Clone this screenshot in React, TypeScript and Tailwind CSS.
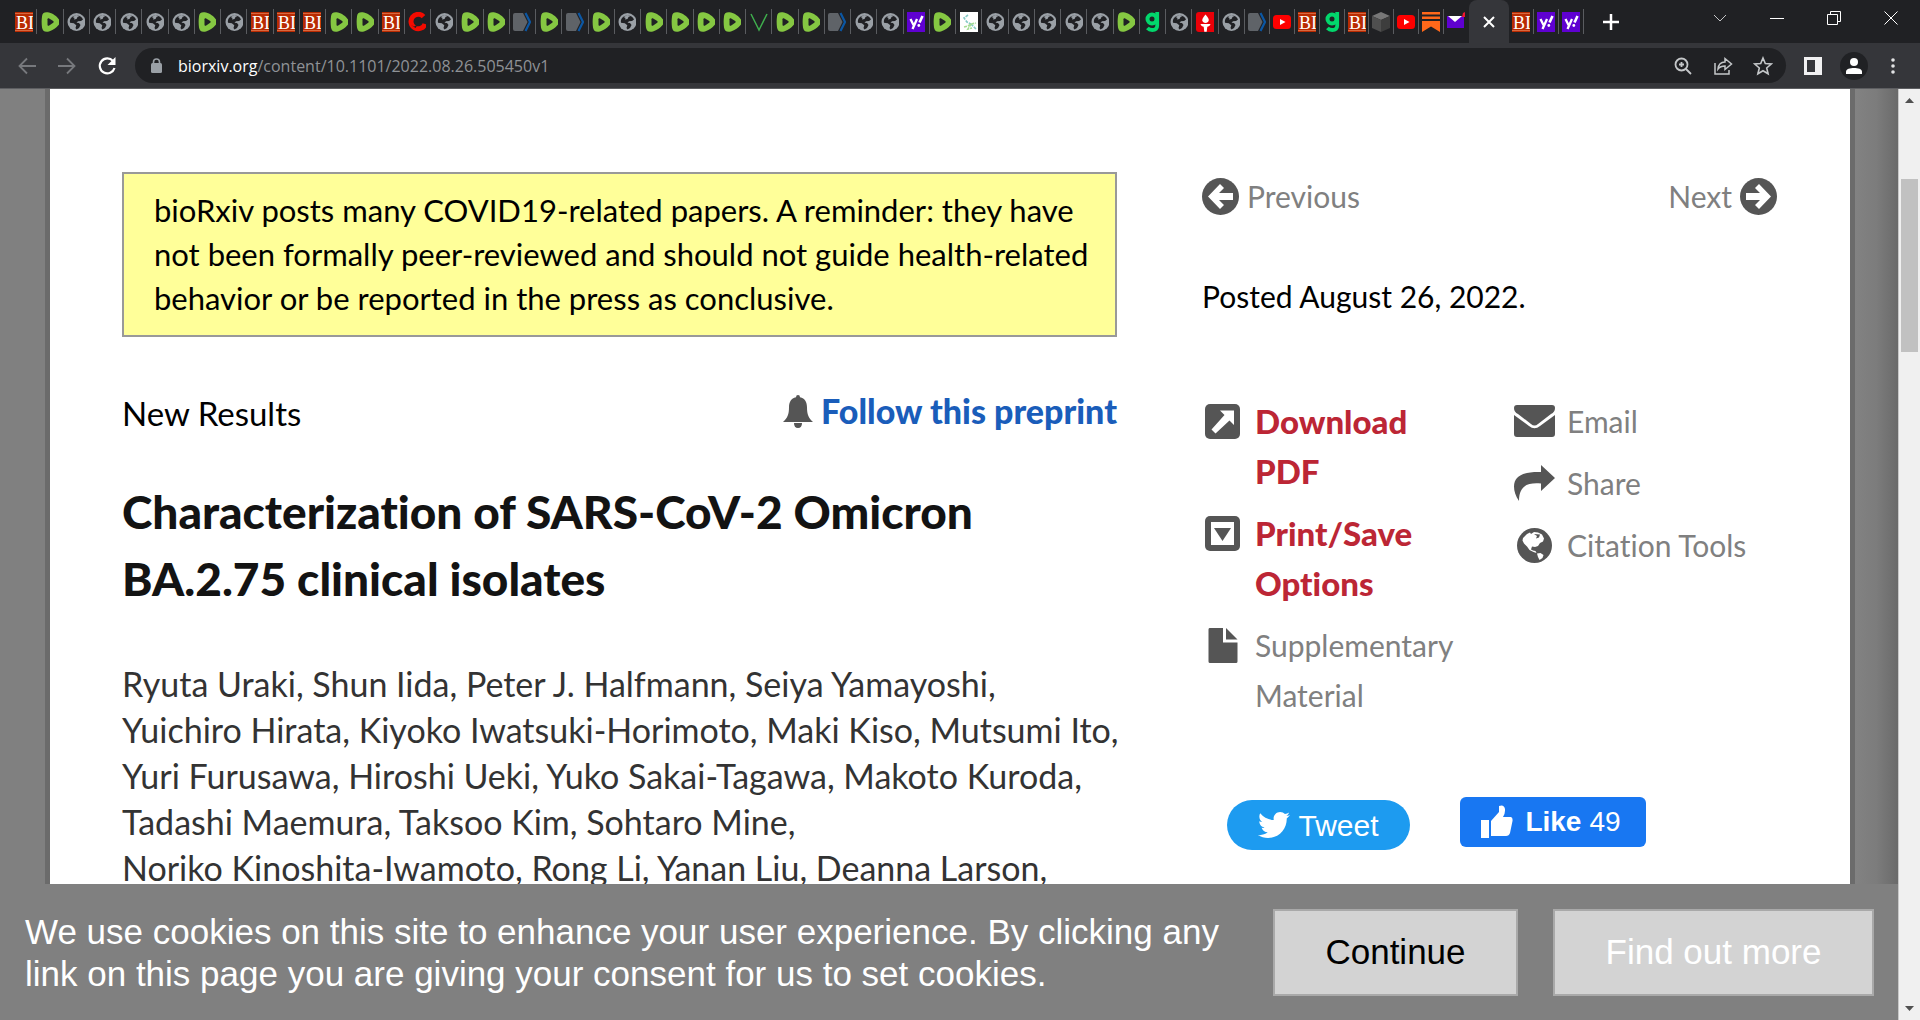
import { FaTwitter } from "react-icons/fa";

const wideTabs =
  "bi rumble globe globe globe globe globe rumble globe bi bi bi rumble rumble bi ring globe rumble rumble tag rumble tag rumble globe rumble rumble rumble rumble vee rumble rumble tag globe globe yahoo rumble mesh globe globe globe globe globe rumble gee globe torch globe".split(
    " ",
  );
const narrowTabs = "tag youtube bi gee bi cube youtube substack mail".split(" ");
const lastTabs = "bi yahoo yahoo".split(" ");

function Glyph({ kind }: { kind: string }) {
  switch (kind) {
    case "bi":
      return (
        <>
          <rect width="20" height="20" fill="#b92b02" />
          <path d="M0 1.5h20M0 18.5h20" stroke="#e0794f" strokeWidth="0.8" />
          <text x="1" y="16.5" fontFamily="Liberation Serif, serif" fontSize="18" fill="#fff">
            BI
          </text>
        </>
      );
    case "rumble":
      return (
        <>
          <path
            d="M1 4.5C1 1 4 -.5 8 .6c4 1 8 4 9.600 6.400 1.500 2 1.500 4 0 6-2.100 2.600-5.600 5.400-9.600 6.400-4 1-6.500-.4-7-3.900C.5 11.500.5 8 1 4.500z"
            fill="#85c742"
          />
          <path d="M6.500 7.200c0-1 .8-1.300 1.700-.8l4 2.700c.7.5.7 1.200 0 1.700l-4 2.800c-.9.5-1.700.1-1.700-.9z" fill="#202124" />
        </>
      );
    case "globe":
      return (
        <>
          <circle cx="9.500" cy="10" r="9" fill="#9aa0a6" />
          <path
            d="M10 3.500c2.500 0 5 1.500 6 4l-2 1.500-3 .2-1.500 1.500 2.500.3 1.500 2-1.500 3-2.500 1.400-1-1.500.8-2.600-2.500-2-3.800-.6c-.8-3.700 2-7.200 7-7.200z"
            fill="#202124"
          />
          <path d="M5.500 5l2 1-.5 1.500 2.500-.5 1-2 2-1-3-1z" fill="#9aa0a6" />
        </>
      );
    case "ring":
      return (
        <>
          <path d="M15.500 4.600A7.200 7.200 0 1 0 17 12" fill="none" stroke="#f40b00" strokeWidth="5" />
          <path d="M3 13l3 1.500 3.500-1.500-2 3z" fill="#202124" />
        </>
      );
    case "tag":
      return (
        <>
          <path d="M0 3q0-2 2-2h8l4.500 9-4.500 9H2q-2 0-2-2z" fill="#5f6368" />
          <path d="M12.500 1l4.500 9-4.500 9" fill="none" stroke="#0b57a4" strokeWidth="2.200" />
        </>
      );
    case "vee":
      return <path d="M1 2l6.500 13 1.500 3 1.500-3L17 2" fill="none" stroke="#3fae4d" strokeWidth="1.500" />;
    case "yahoo":
      return (
        <>
          <rect width="20" height="20" fill="#5f01d1" />
          <path d="M3.500 7l3 6M10 7l-4.500 10" stroke="#fff" strokeWidth="2.300" />
          <path d="M15.500 4l-3 6.500" stroke="#fff" strokeWidth="2.600" />
          <circle cx="11.800" cy="13.500" r="1.400" fill="#fff" />
        </>
      );
    case "mesh":
      return (
        <>
          <rect width="20" height="20" fill="#fff" />
          <path d="M8 3L4 6l3 4 4 2M11 12l5 5" fill="none" stroke="#84c9c5" strokeWidth="1.600" strokeDasharray="3 1" />
          <path d="M4 15l4-1 3-2 5-1M11 12l-3 5 4-1" fill="none" stroke="#a4dc93" strokeWidth="1.600" strokeDasharray="3 1" />
        </>
      );
    case "gee":
      return (
        <>
          <circle cx="9" cy="7" r="4.500" fill="none" stroke="#02d76c" strokeWidth="4" />
          <path d="M14.200 0v13.500c0 3-2 4.500-5 4.500-2 0-3.500-.6-4.800-2" fill="none" stroke="#02d76c" strokeWidth="3.800" />
        </>
      );
    case "torch":
      return (
        <>
          <rect width="20" height="20" rx="3" fill="#ea0008" />
          <path d="M9.500 2.500c2.500 3 3.500 4.500 3.200 6-.3 1.500-1.600 2.500-3.200 2.500s-3-1-3.200-2.500c-.2-1.500.8-3 3.200-6z" fill="#fff" />
          <path d="M4.500 12h10c-.5 2-2 2.700-3.200 2.700l-.6 5H8.300l-.6-5c-1.200 0-2.700-.7-3.200-2.700z" fill="#fff" />
        </>
      );
    case "youtube":
      return (
        <>
          <rect y="3" width="18" height="14" rx="3.500" fill="#fe0000" />
          <path d="M7 7l5.500 3L7 13z" fill="#fff" />
        </>
      );
    case "cube":
      return (
        <>
          <path d="M9 0l9 4-9 4-9-4z" fill="#777" />
          <path d="M0 4l9 4v12l-9-4z" fill="#4f4f4f" />
          <path d="M18 4L9 8v12l9-4z" fill="#3d3d3d" />
        </>
      );
    case "substack":
      return <path d="M0 0h18v2.500H0zM0 4.500h18V7H0zM0 9h18v11l-9-5.500L0 20z" fill="#ff681a" />;
    default:
      return (
        <>
          <rect y="4" width="17" height="12" fill="#5f01d1" />
          <path d="M1 4h14l-7 6z" fill="#fff" />
          <path d="M16 1l2-1v5h-3z" fill="#f0162f" />
        </>
      );
  }
}

function Favicon({ kind }: { kind: string }) {
  return (
    <svg viewBox="0 0 20 20" preserveAspectRatio="xMinYMid slice" className="h-5 w-[18px]" aria-hidden="true">
      <Glyph kind={kind} />
    </svg>
  );
}

function TabGroup({ kinds, className, dividers = true }: { kinds: string[]; className: string; dividers?: boolean }) {
  return (
    <div className={`flex h-[25px] ${className}`}>
      {kinds.map((kind, idx) => (
        <button
          key={idx}
          aria-label={kind}
          className={`flex flex-1 items-center justify-center border-r ${
            !dividers && idx === kinds.length - 1 ? "border-transparent" : "border-[#5a5c60]"
          }`}
        >
          <Favicon kind={kind} />
        </button>
      ))}
    </div>
  );
}

function TabStrip() {
  return (
    <div className="flex h-[43px] items-center overflow-hidden bg-[#202124] pr-px pl-[11px]">
      <TabGroup kinds={wideTabs} className="w-[1234px] shrink-0" />
      <TabGroup kinds={narrowTabs} className="w-[224px] shrink-0" dividers={false} />
      <div className="flex h-full w-10 shrink-0 items-center justify-center rounded-t-lg bg-[#35363a]">
        <svg viewBox="0 0 12 12" className="size-3" stroke="#fff" strokeWidth="2">
          <path d="M1 1l10 10M11 1L1 11" />
        </svg>
      </div>
      <TabGroup kinds={lastTabs} className="w-[75px] shrink-0" />
      <button aria-label="New tab" className="ml-[19px]">
        <svg viewBox="0 0 16 16" className="size-4" stroke="#fff" strokeWidth="2.500">
          <path d="M8 0v16M0 8h16" />
        </svg>
      </button>
      <div className="ml-auto flex shrink-0 pb-2 text-white">
        <button aria-label="Search tabs" className="flex w-[57px] justify-center">
          <svg viewBox="0 0 14 14" className="size-3.5" fill="none" stroke="#c4c5c7">
            <path d="M1 4l6 6 6-6" />
          </svg>
        </button>
        <button aria-label="Minimize" className="flex w-[57px] justify-center">
          <svg viewBox="0 0 14 14" className="size-3.5" stroke="currentColor">
            <path d="M0 7.500h14" />
          </svg>
        </button>
        <button aria-label="Restore" className="flex w-[57px] justify-center">
          <svg viewBox="0 0 14 14" className="size-3.5" fill="none" stroke="currentColor">
            <path d="M.5 3.500h10v10H.5zM3.500 3.500v-3h10v10h-3" />
          </svg>
        </button>
        <button aria-label="Close" className="flex w-[57px] justify-center">
          <svg viewBox="0 0 14 14" className="size-3.5" stroke="currentColor">
            <path d="M.5.5l13 13M13.500.5l-13 13" />
          </svg>
        </button>
      </div>
    </div>
  );
}

function Toolbar() {
  return (
    <div className="flex h-[46px] items-center border-b border-[#5d5e61] bg-[#35363a] pr-[25px] pl-[17px]">
      <button aria-label="Back">
        <svg viewBox="0 0 20 20" className="size-5" fill="none" stroke="#77797d" strokeWidth="1.800">
          <path d="M19 10H3M10 2.500L2.500 10l7.500 7.500" />
        </svg>
      </button>
      <button aria-label="Forward" className="ml-5">
        <svg viewBox="0 0 20 20" className="size-5" fill="none" stroke="#77797d" strokeWidth="1.800">
          <path d="M1 10h16M10 2.500l7.500 7.500-7.500 7.500" />
        </svg>
      </button>
      <button aria-label="Reload" className="ml-5">
        <svg viewBox="0 0 20 20" className="size-5" fill="none" stroke="#fff" strokeWidth="2.200">
          <path d="M16 5a7.500 7.500 0 1 0 1.500 7" />
          <path d="M18.500 1v8h-8z" fill="#fff" stroke="none" />
        </svg>
      </button>
      <div className="ml-[18px] flex h-[35px] flex-1 items-center rounded-full bg-[#202124] pr-[13px] pl-4 font-['Open_Sans',sans-serif] text-base">
        <svg viewBox="0 0 12 16" className="mr-[15px] h-4 w-3 shrink-0">
          <rect y="5" width="11" height="10" rx="1.500" fill="#9aa0a6" />
          <path d="M2.500 6V4a3 3 0 0 1 6 0v2" fill="none" stroke="#9aa0a6" strokeWidth="1.600" />
        </svg>
        <span className="text-white">biorxiv.org</span>
        <span className="text-[#8f9296]">/content/10.1101/2022.08.26.505450v1</span>
        <div className="ml-auto flex gap-5">
          <button aria-label="Zoom">
            <svg viewBox="0 0 20 20" className="size-5" fill="none" stroke="#c4c7c9" strokeWidth="1.800">
              <circle cx="8.500" cy="8.500" r="6" />
              <path d="M13 13l5 5M8.500 6v5M6 8.500h5" />
            </svg>
          </button>
          <button aria-label="Share this page">
            <svg viewBox="0 0 20 20" className="size-5" fill="none" stroke="#c4c7c9" strokeWidth="1.500">
              <path d="M2 7v11h14v-4" />
              <path d="M5 13c.5-5 3-7 7-7V2.500L18.500 8 12 13.500V10c-3 0-5 .5-7 3z" />
            </svg>
          </button>
          <button aria-label="Bookmark">
            <svg viewBox="0 0 20 20" className="size-5" fill="none" stroke="#c4c7c9" strokeWidth="1.600">
              <path d="M10 2l2.300 5.500 6 .5-4.600 4 1.400 5.800L10 14.700l-5.100 3.100L6.300 12 1.700 8l6-.5z" />
            </svg>
          </button>
        </div>
      </div>
      <button aria-label="Side panel" className="ml-[18px]">
        <svg viewBox="0 0 18 18" className="size-[18px]">
          <path d="M0 0h18v18H0zM3 3v12h8V3z" fill="#f1f1f2" fillRule="evenodd" />
        </svg>
      </button>
      <button aria-label="Profile" className="ml-[18px] flex size-7 items-center justify-center rounded-full bg-[#202124]">
        <svg viewBox="0 0 16 16" className="size-4" fill="#fff">
          <circle cx="8" cy="4" r="4" />
          <path d="M0 16v-2.500C0 11 4 10 8 10s8 1 8 3.500V16z" />
        </svg>
      </button>
      <button aria-label="Menu" className="ml-[23px]">
        <svg viewBox="0 0 4 16" className="h-4 w-1" fill="#e3e4e5">
          <circle cx="2" cy="2" r="1.800" />
          <circle cx="2" cy="8" r="1.800" />
          <circle cx="2" cy="14" r="1.800" />
        </svg>
      </button>
    </div>
  );
}

function ArrowCircle({ flip = false }: { flip?: boolean }) {
  return (
    <svg viewBox="0 0 37 37" className={flip ? "size-[37px] rotate-180" : "size-[37px]"}>
      <circle cx="18.500" cy="18.500" r="18.500" fill="#555" />
      <path d="M6 18.500L18 6l4 4-5 5h14v7H17l5 5-4 4z" fill="#fff" />
    </svg>
  );
}

function ToolIcon({ kind }: { kind: string }) {
  switch (kind) {
    case "pdf":
      return (
        <svg viewBox="0 0 35 35" className="h-[35px] w-[35px]">
          <rect width="35" height="35" rx="5" fill="#555" />
          <path d="M15 6.500h14v14.500l-4.500-4.500L10.500 29.500 6.500 25.500 19.500 11z" fill="#fff" />
        </svg>
      );
    case "print":
      return (
        <svg viewBox="0 0 35 35" className="h-[35px] w-[35px]">
          <rect width="35" height="35" rx="5" fill="#555" />
          <path d="M6 6h23v23H6z" fill="#fff" />
          <path d="M9 12h17l-8.500 13z" fill="#555" />
        </svg>
      );
    case "file":
      return (
        <svg viewBox="0 0 30 35" className="h-[35px] w-[30px]" fill="#555">
          <path d="M1.500 0H15v14.500h14.500v19q0 1.500-1.500 1.500H2q-1.500 0-1.500-1.500V1.500Q.5 0 1.500 0z" />
          <path d="M18 0l11.500 11.500H18z" />
        </svg>
      );
    case "email":
      return (
        <svg viewBox="0 0 41 32" className="h-[32px] w-[41px]" fill="#555">
          <path d="M3 0h35q3 0 3 3 0 4-4 6L24 19q-3.500 3-7 0L4 9Q0 7 0 3q0-3 3-3z" />
          <path d="M0 10l15 11q5.500 4.500 11 0l15-11v19q0 3-3 3H3q-3 0-3-3z" />
        </svg>
      );
    case "share":
      return (
        <svg viewBox="0 0 41 36" className="h-[36px] w-[41px]" fill="#555">
          <path d="M27 0l14 13-14 13v-7.500C15 17.500 5 19.500 5 36 1.500 31 0 26 0 21.500 0 11 9 6.500 27 7z" />
        </svg>
      );
    default:
      return (
        <svg viewBox="0 0 35 35" className="h-[35px] w-[35px]">
          <circle cx="17.500" cy="17.500" r="17.500" fill="#555" />
          <path
            d="M6 10l4-4 3-1.500 1 1.500 3-2 4 .5 4 2 2 4-1 3-3 1.500-2 3-3 1-3-.5-1 3 2 1 2.500.5 1 2-3-1-4-2-2.500-3.500-3-3-1.500-3z"
            fill="#fff"
          />
          <path d="M20 25.500l3.500-.5 3 2-1 3-3 2-1.500-3z" fill="#fff" />
          <path d="M17 6l3 2-1 2.500 3-1 1-3z" fill="#555" />
        </svg>
      );
  }
}

function ToolLink({ kind, label, strong = false }: { kind: string; label: string; strong?: boolean }) {
  return (
    <a
      href="#tools"
      className={`flex leading-[50px] ${strong ? "text-[33px] font-black text-[#bc2635]" : "text-[30px] text-[#808080]"}`}
    >
      <span className="mr-3 flex h-[50px] w-[41px] shrink-0 items-center justify-center">
        <ToolIcon kind={kind} />
      </span>
      {label}
    </a>
  );
}

function Sidebar() {
  return (
    <aside className="mr-[73px] w-[575px] shrink-0">
      <nav className="mt-1 flex justify-between text-[30px] leading-[40px] text-[#808080]">
        <a href="#previous" className="flex items-center gap-2">
          <ArrowCircle />
          Previous
        </a>
        <a href="#next" className="flex items-center gap-2">
          Next
          <ArrowCircle flip />
        </a>
      </nav>
      <p className="mt-[57px] text-[30px] leading-[46px]">Posted August 26, 2022.</p>

      <div id="tools" className="mt-[77px] flex">
        <div className="flex w-[312px] flex-col gap-3 pr-[52px]">
          <ToolLink kind="pdf" label="Download PDF" strong />
          <ToolLink kind="print" label="Print/Save Options" strong />
          <ToolLink kind="file" label="Supplementary Material" />
        </div>
        <div className="flex flex-col gap-3">
          <ToolLink kind="email" label="Email" />
          <ToolLink kind="share" label="Share" />
          <ToolLink kind="citation" label="Citation Tools" />
        </div>
      </div>

      <div className="mt-[77px] flex items-start gap-[50px] pl-[25px] font-['Liberation_Sans',Arial,sans-serif] text-white">
        <button className="mt-[3px] flex h-[50px] w-[183px] items-center justify-center gap-2 rounded-full bg-[#1d9bf0] text-[30px]">
          <FaTwitter className="size-8" />
          Tweet
        </button>
        <button className="flex h-[50px] w-[186px] items-center justify-center gap-2 rounded-md bg-[#1877f2] pr-1 text-[28px]">
          <svg viewBox="0 0 32 34" className="mr-1 h-[34px] w-8" fill="#fff">
            <path d="M0 15h8v18H0zM10 16l8-9V1q5-2 6 3 .5 4-2 8h8q2 1 1.500 4L29 28q-1 3-4 3H10z" />
          </svg>
          <b>Like</b>
          49
        </button>
      </div>
    </aside>
  );
}

function Article() {
  return (
    <main className="w-[995px] shrink-0">
      <p className="border-2 border-[#999] bg-[#ff9] px-[30px] pt-[14px] pb-[15px] text-[31px] leading-[44px] whitespace-nowrap">
        bioRxiv posts many COVID19-related papers. A reminder: they have
        <br />
        not been formally peer-reviewed and should not guide health-related
        <br />
        behavior or be reported in the press as conclusive.
      </p>

      <div className="mt-[53px] flex items-center justify-between leading-[46px]">
        <span className="text-[33px]">New Results</span>
        <a href="#follow" className="flex items-center gap-2 pb-1 text-[34px] leading-[42px] font-black text-[#1a5dba]">
          <svg viewBox="0 0 30 33" className="h-[33px] w-[30px]" fill="#555">
            <path d="M15 0q2 0 2 2.200c5 1 7 5 7 10 0 7 1.500 11 6 14.800H0c4.500-3.800 6-7.800 6-14.800 0-5 2-9 7-10Q13 0 15 0zM11 28h8q0 5-4 5t-4-5z" />
          </svg>
          Follow this preprint
        </a>
      </div>

      <h1 className="mt-[42px] text-[46px] leading-[67px] font-black whitespace-nowrap text-[#131313]">
        Characterization of SARS-CoV-2 Omicron
        <br />
        BA.2.75 clinical isolates
      </h1>

      <p className="mt-[49px] text-[34px] leading-[46px] whitespace-nowrap text-[#333]">
        Ryuta Uraki, Shun Iida, Peter J. Halfmann, Seiya Yamayoshi,
        <br />
        Yuichiro Hirata, Kiyoko Iwatsuki-Horimoto, Maki Kiso, Mutsumi Ito,
        <br />
        Yuri Furusawa, Hiroshi Ueki, Yuko Sakai-Tagawa, Makoto Kuroda,
        <br />
        Tadashi Maemura, Taksoo Kim, Sohtaro Mine,
        <br />
        Noriko Kinoshita-Iwamoto, Rong Li, Yanan Liu, Deanna Larson,
      </p>
    </main>
  );
}

function CookieBanner() {
  return (
    <div className="flex shrink-0 items-center bg-[#808080] pt-[25px] pr-6 pb-6 pl-[25px] font-['Liberation_Sans',Arial,sans-serif] text-[35px]">
      <p className="leading-[42px] whitespace-nowrap text-white">
        We use cookies on this site to enhance your user experience. By clicking any
        <br />
        link on this page you are giving your consent for us to set cookies.
      </p>
      <button className="ml-auto h-[87px] w-[245px] shrink-0 border-2 border-[#a9a9a9] bg-[#d3d3d3] text-black">
        Continue
      </button>
      <button className="ml-[35px] h-[87px] w-[321px] shrink-0 border-2 border-[#a9a9a9] bg-[#d3d3d3] text-white">
        Find out more
      </button>
    </div>
  );
}

function Scrollbar() {
  return (
    <div className="flex w-[22px] shrink-0 flex-col items-center border-l border-[#c8c8c8] bg-[#f0f0f0] py-[9px]">
      <svg viewBox="0 0 9 5" className="h-[5px] w-[9px]" fill="#505050">
        <path d="M0 5l4.500-5L9 5z" />
      </svg>
      <div className="mt-[76px] h-[173px] w-[17px] bg-[#c1c1c1]" />
      <svg viewBox="0 0 9 5" className="mt-auto h-[5px] w-[9px]" fill="#505050">
        <path d="M0 0l4.500 5L9 0z" />
      </svg>
    </div>
  );
}

export default function App() {
  return (
    <div className="flex h-screen flex-col overflow-hidden font-['Lato',sans-serif] text-black [font-variant-ligatures:none]">
      <TabStrip />
      <Toolbar />
      <div className="flex min-h-0 flex-1">
        <div className="flex min-w-0 flex-1 flex-col">
          <div className="flex min-h-0 flex-1 overflow-hidden bg-[#808080]">
            <div className="ml-[45px] flex min-w-0 flex-1 justify-between border-x-[5px] border-[#6b6b6b] bg-white pt-[83px] pl-[72px]">
              <Article />
              <Sidebar />
            </div>
            <div className="w-[43px] shrink-0 bg-linear-to-r from-[#828282] via-[#7c7c7c] to-[#6a6a6a]" />
          </div>
          <CookieBanner />
        </div>
        <Scrollbar />
      </div>
    </div>
  );
}
